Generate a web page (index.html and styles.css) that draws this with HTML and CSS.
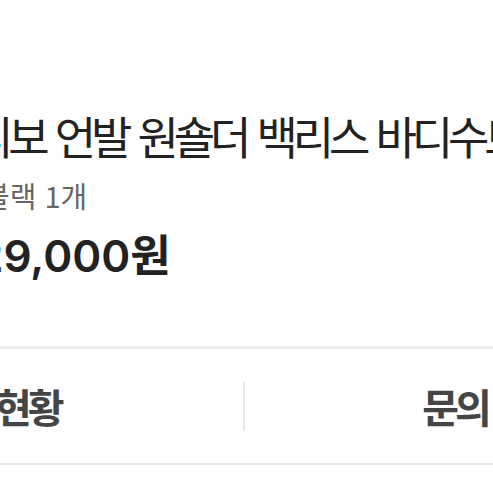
FILE: index.html
```html
<!DOCTYPE html>
<html lang="ko">
<head>
<meta charset="utf-8">
<link rel="stylesheet" href="styles.css">
</head>
<body>
<main class="page">
  <section class="info">
    <h1 class="title">리보 언발 원숄더 백리스 바디수트</h1>
    <p class="option">블랙 1개</p>
    <p class="price">29,000<span class="won">원</span></p>
  </section>
  <nav class="tabs">
    <div class="tab tab-left">거래현황</div>
    <div class="divider"></div>
    <div class="tab tab-right">문의</div>
  </nav>
</main>
</body>
</html>
```
FILE: styles.css
```css
html, body {
  margin: 0;
  padding: 0;
  background: #ffffff;
}
body {
  width: 493px;
  height: 493px;
  overflow: hidden;
  font-family: "Noto Sans CJK KR", "Noto Sans", sans-serif;
}
.page {
  padding-top: 110px;
}
.info {
  margin-left: -28px;
  display: flex;
  flex-direction: column;
}
.title {
  margin: 0 0 0 0;
  font-size: 45px;
  line-height: 52px;
  font-weight: 400;
  letter-spacing: -5.2px;
  word-spacing: 3px;
  color: #222222;
  white-space: nowrap;
}
.option {
  margin: 15px 0 0 11px;
  font-size: 29px;
  line-height: 36px;
  color: #666666;
  white-space: nowrap;
}
.price {
  margin: 12px 0 0 4px;
  font-family: "Inter", "Noto Sans CJK KR", sans-serif;
  font-size: 44px;
  line-height: 56px;
  font-weight: 600;
  color: #222222;
  white-space: nowrap;
}
.won {
  font-family: "Noto Sans CJK KR", sans-serif;
  font-weight: 700;
}
.tabs {
  margin-top: 62px;
  margin-left: -253px;
  display: flex;
  align-items: center;
  height: 114px;
  border-top: 3px solid #ececec;
  border-bottom: 2px solid #e9e9e9;
}
.tab {
  display: flex;
  justify-content: center;
  font-size: 40px;
  font-weight: 700;
  letter-spacing: -4px;
  color: #454545;
  white-space: nowrap;
}
.tab-left {
  width: 496px;
  flex: none;
}
.tab-right {
  width: 420px;
  flex: none;
}
.divider {
  flex: none;
  width: 2px;
  height: 49px;
  background: #e8e8e8;
}
```
